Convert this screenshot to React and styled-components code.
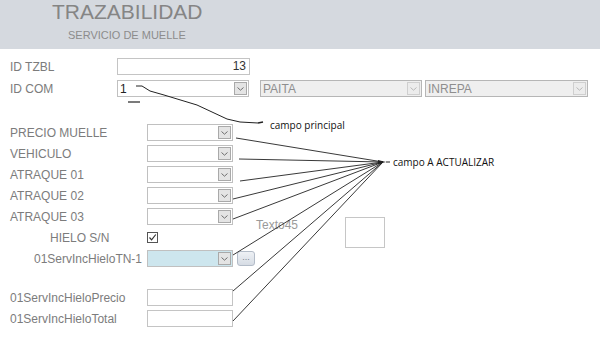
import styled, { createGlobalStyle } from "styled-components";

const GlobalStyle = createGlobalStyle`
    html, body {
        margin: 0;
        padding: 0;
        background: #ffffff;
    }
    body {
        font-family: "Liberation Sans", Arial, sans-serif;
        width: 600px;
        height: 338px;
        overflow: hidden;
    }
`

function Chevron({faded}) {
    return (
        <svg width="7" height="4" viewBox="0 0 7 4">
            <path d="M0.5 0.5 L3.5 3.2 L6.5 0.5" fill="none" stroke={faded ? "#b8b8b8" : "#6e6e6e"} strokeWidth="1"/>
        </svg>
    )
}

function Combo({value, width, disabled, tinted}) {
    return (
        <ComboBox width={width} disabled={disabled} tinted={tinted}>
            <span>{value}</span>
            <Arrow disabled={disabled}><Chevron faded={disabled}/></Arrow>
        </ComboBox>
    )
}

function Annotations() {
    const target = [383, 162]
    const starts = [
        [236, 138],
        [239, 159],
        [240, 181],
        [233, 199],
        [233, 219],
        [233, 255],
        [233, 291],
        [233, 321],
    ]
    return (
        <Overlay width="600" height="338" viewBox="0 0 600 338">
            <path d="M128 102 L140 102" stroke="#222" strokeWidth="1.2" fill="none"/>
            <path d="M136 86 L142 86 L150 91 L164 95 L197 105 L227 119 L240 122 L258 123" stroke="#222" strokeWidth="1" fill="none"/>
            <path d="M258 123 L263 122" stroke="#222" strokeWidth="1.5" fill="none"/>
            {starts.map(([x, y], i) => (
                <line key={i} x1={x} y1={y} x2={target[0]} y2={target[1]} stroke="#222" strokeWidth="0.9"/>
            ))}
            <path d="M378 160 L386 162 L378 164 Z" fill="#222"/>
            <path d="M386 162 L390 162" stroke="#222" strokeWidth="1"/>
        </Overlay>
    )
}

export default function App() {
    return (
        <>
            <GlobalStyle/>
            <Page>
                <Header>
                    <Title>TRAZABILIDAD</Title>
                    <Subtitle>SERVICIO DE MUELLE</Subtitle>
                </Header>

                <TopForm>
                    <Row>
                        <Label width={107}>ID TZBL</Label>
                        <TextBox width={133} align="right">13</TextBox>
                    </Row>
                    <Row>
                        <Label width={107}>ID COM</Label>
                        <Combo value="1" width={132}/>
                        <Spacer/>
                        <Combo value="PAITA" width={162} disabled/>
                        <Combo value="INREPA" width={163} disabled/>
                    </Row>
                </TopForm>

                <Lower>
                    <LeftColumn>
                        <Row>
                            <Label width={137}>PRECIO MUELLE</Label>
                            <Combo width={86}/>
                        </Row>
                        <Row>
                            <Label width={137}>VEHICULO</Label>
                            <Combo width={86}/>
                        </Row>
                        <Row>
                            <Label width={137}>ATRAQUE 01</Label>
                            <Combo width={86}/>
                        </Row>
                        <Row>
                            <Label width={137}>ATRAQUE 02</Label>
                            <Combo width={86}/>
                        </Row>
                        <Row>
                            <Label width={137}>ATRAQUE 03</Label>
                            <Combo width={86}/>
                        </Row>
                        <Row>
                            <Label width={137} indent={40}>HIELO S/N</Label>
                            <CheckBox>
                                <svg width="9" height="9" viewBox="0 0 9 9">
                                    <path d="M1.5 4.5 L3.6 6.8 L7.8 1.5" fill="none" stroke="#333" strokeWidth="1.2"/>
                                </svg>
                            </CheckBox>
                        </Row>
                        <Row>
                            <Label width={137} indent={24}>01ServIncHieloTN-1</Label>
                            <Combo width={86} tinted/>
                            <DotsButton>...</DotsButton>
                        </Row>
                        <Row gapAbove={18}>
                            <Label width={137}>01ServIncHieloPrecio</Label>
                            <TextBox width={86}/>
                        </Row>
                        <Row>
                            <Label width={137}>01ServIncHieloTotal</Label>
                            <TextBox width={86}/>
                        </Row>
                    </LeftColumn>
                    <SidePanel>
                        <FieldName>Texto45</FieldName>
                        <EmptyBox/>
                    </SidePanel>
                </Lower>

                <Annotations/>
                <Note top={118} left={270}>campo principal</Note>
                <Note top={155} left={393}>campo A ACTUALIZAR</Note>
            </Page>
        </>
    )
}

const Page = styled.div`
    position: relative;
    width: 600px;
    height: 338px;
`
const Header = styled.div`
    height: 49px;
    background-color: #d5d9df;
    display: flex;
    flex-direction: column;
`
const Title = styled.div`
    padding-left: 52px;
    font-size: 21px;
    line-height: 24px;
    color: #858585;
`
const Subtitle = styled.div`
    padding-left: 68px;
    margin-top: 5px;
    font-size: 11px;
    line-height: 13px;
    color: #8c8c8c;
`
const TopForm = styled.div`
    padding: 9px 0 0 10px;
    display: flex;
    flex-direction: column;
    gap: 5px;
`
const Row = styled.div`
    display: flex;
    align-items: center;
    height: 17px;
    margin-top: ${p => p.gapAbove || 0}px;
`
const Label = styled.div`
    width: ${p => p.width}px;
    flex-shrink: 0;
    box-sizing: border-box;
    padding-left: ${p => p.indent || 0}px;
    font-size: 12px;
    color: #7c7c7c;
    white-space: nowrap;
`
const TextBox = styled.div`
    width: ${p => p.width}px;
    height: 17px;
    box-sizing: border-box;
    border: 1px solid #c4c4c4;
    background: #ffffff;
    font-size: 12px;
    line-height: 15px;
    color: #333333;
    text-align: ${p => p.align || "left"};
    padding: 0 3px;
`
const ComboBox = styled.div`
    width: ${p => p.width}px;
    height: 17px;
    box-sizing: border-box;
    border: 1px solid ${p => p.disabled ? "#b6b6b6" : "#c0c0c0"};
    background: ${p => p.tinted ? "#cde6ee" : p.disabled ? "#efefef" : "#ffffff"};
    display: flex;
    align-items: center;
    justify-content: space-between;
    padding: 0 1px 0 2px;
    font-size: 12px;
    color: ${p => p.disabled ? "#8e8e8e" : "#222222"};
    flex-shrink: 0;

    && + && {
        margin-left: 3px;
    }
`
const Arrow = styled.div`
    width: 13px;
    height: 13px;
    box-sizing: border-box;
    border: 1px solid ${p => p.disabled ? "#cfcfcf" : "#a9a9a9"};
    background: ${p => p.disabled ? "#ececec" : "#e4e4e4"};
    display: flex;
    align-items: center;
    justify-content: center;
`
const Spacer = styled.div`
    width: 11px;
`
const Lower = styled.div`
    margin-top: 27px;
    padding-left: 10px;
    display: flex;
`
const LeftColumn = styled.div`
    width: 246px;
    display: flex;
    flex-direction: column;
    gap: 4px;
`
const CheckBox = styled.div`
    width: 11px;
    height: 11px;
    box-sizing: border-box;
    border: 1px solid #555;
    background: #fff;
    display: flex;
    align-items: center;
    justify-content: center;
`
const DotsButton = styled.div`
    margin-left: 4px;
    width: 18px;
    height: 15px;
    box-sizing: border-box;
    border: 1px solid #b3bcc8;
    border-radius: 3px;
    background: linear-gradient(#eef1f5, #d6dce4);
    font-size: 9px;
    line-height: 10px;
    text-align: center;
    color: #7a8290;
`
const SidePanel = styled.div`
    display: flex;
    align-items: flex-start;
    padding-top: 94px;
`
const FieldName = styled.div`
    font-size: 12px;
    line-height: 14px;
    color: #9a9a9a;
`
const EmptyBox = styled.div`
    margin-left: 47px;
    margin-top: -1px;
    width: 40px;
    height: 31px;
    box-sizing: border-box;
    border: 1px solid #c6c6c6;
`
const Overlay = styled.svg`
    position: absolute;
    top: 0;
    left: 0;
    pointer-events: none;
`
const Note = styled.div`
    position: absolute;
    top: ${p => p.top}px;
    left: ${p => p.left}px;
    font-family: "Open Sans", "Noto Sans", sans-serif;
    font-size: 10px;
    line-height: 14px;
    color: #111111;
    white-space: nowrap;
`
